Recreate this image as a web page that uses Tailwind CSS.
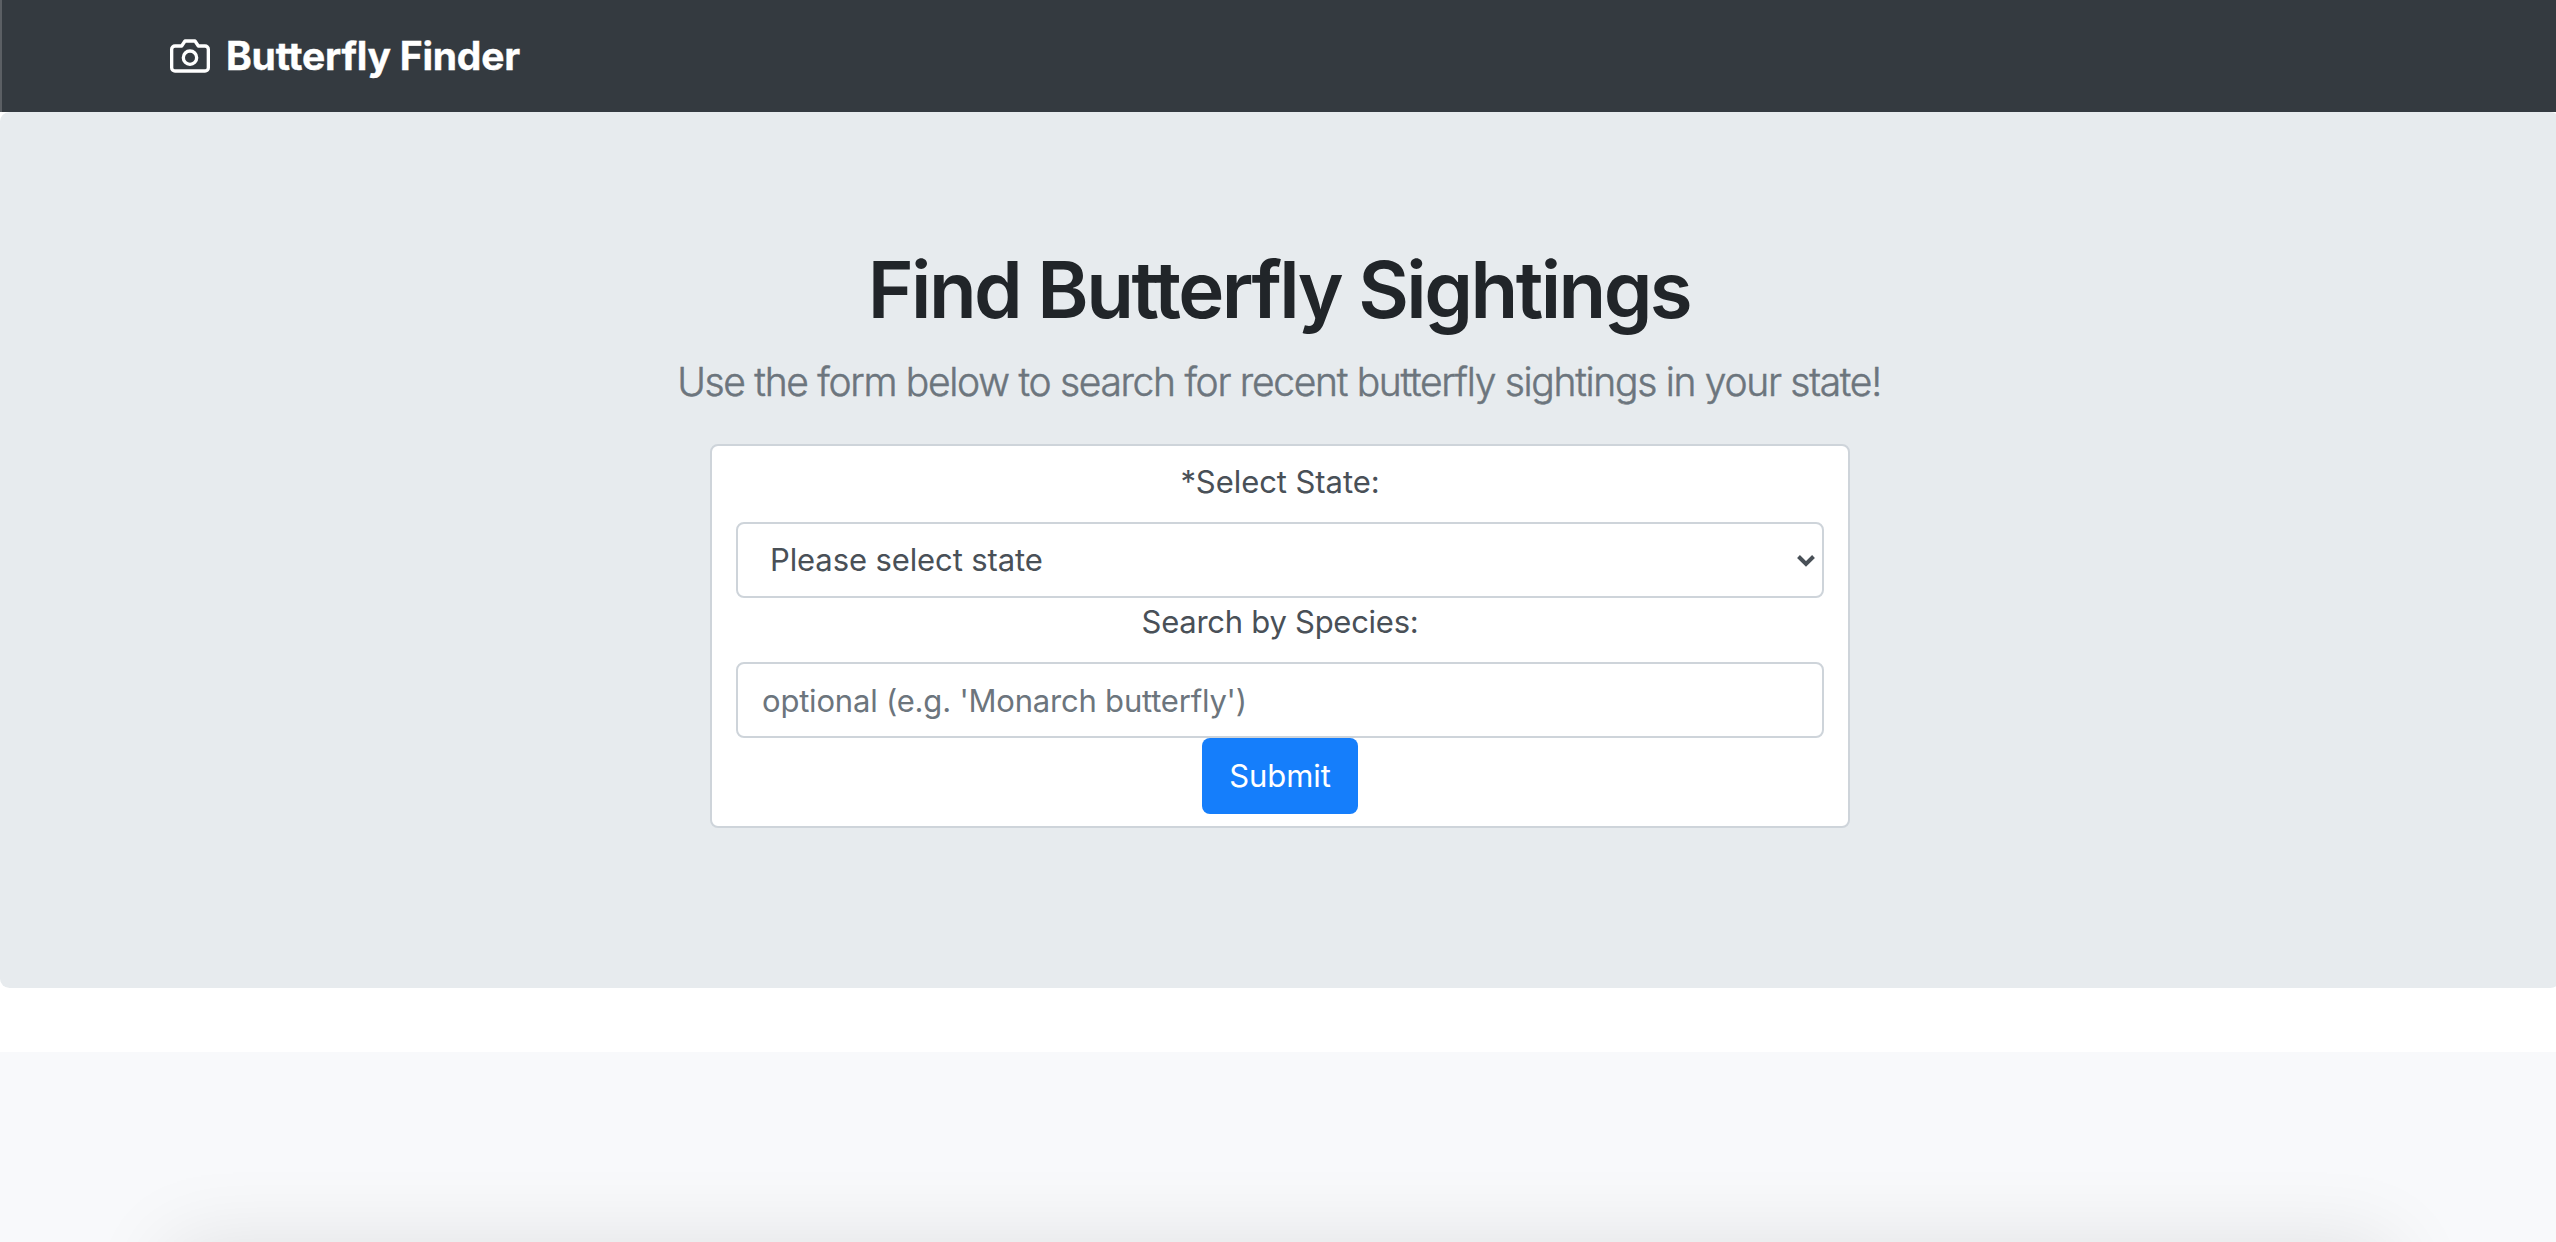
<!DOCTYPE html>
<html lang="en">
<head>
<meta charset="utf-8">
<title>Butterfly Finder</title>
<script src="https://cdn.jsdelivr.net/npm/@tailwindcss/browser@4"></script>
</head>
<body class="h-[1242px] overflow-hidden bg-white font-[Inter,sans-serif] text-[31px] leading-[48px] text-[#212529]">
<div class="w-[2560px]">
  <header class="flex h-28 items-center border-l-2 border-[#5b5f64] bg-[#343a40] pl-[168px]">
    <a class="flex items-center text-[39px] leading-[60px] font-bold tracking-[-0.22px] text-white [-webkit-text-stroke:0.4px_#fff]">
      <svg class="mr-4 size-10" viewBox="0 0 24 24" fill="none" stroke="currentColor" stroke-width="2" stroke-linecap="round" stroke-linejoin="round" aria-hidden="true"><path d="M23 19a2 2 0 0 1-2 2H3a2 2 0 0 1-2-2V8a2 2 0 0 1 2-2h4l2-3h6l2 3h4a2 2 0 0 1 2 2z"/><circle cx="12" cy="13" r="4"/></svg>
      <span>Butterfly Finder</span>
    </a>
  </header>
  <main>
    <section class="mb-16 flex h-[876px] flex-col items-center rounded-[9.6px] bg-[#e7ebee] pt-[130px] text-center">
      <h1 class="mb-3.5 -ml-0.5 text-[78px] leading-24 font-semibold tracking-[-2.56px]">Find Butterfly Sightings</h1>
      <p class="mb-8 -ml-0.5 text-[39px] leading-[60px] font-light tracking-[-1.3px] text-[#6c757d] [-webkit-text-stroke:0.5px_#6c757d]">Use the form below to search for recent butterfly sightings in your state!</p>
      <form class="flex w-[1140px] flex-col items-center rounded-lg border-2 border-[#ced4da] bg-white px-6 py-3 text-[#495057]">
        <label for="state" class="mb-4 tracking-[-0.06px]">*Select State:</label>
        <div class="relative w-full">
          <select id="state" class="block h-[76px] w-full appearance-none rounded-lg border-2 border-[#ced4da] bg-white px-8 tracking-[-0.11px]">
            <option>Please select state</option>
          </select>
          <svg class="pointer-events-none absolute top-[33px] right-[9px] h-[12px] w-[18px]" viewBox="0 0 18 12" fill="none" stroke="#495057" stroke-width="4" aria-hidden="true"><path d="M1.5 1.5 9 9l7.5-7.5"/></svg>
        </div>
        <label for="species" class="mb-4 tracking-[-0.27px]">Search by Species:</label>
        <input id="species" type="text" placeholder="optional (e.g. 'Monarch butterfly')" class="h-[76px] w-full rounded-lg border-2 border-[#ced4da] bg-white px-6 tracking-[-0.2px] placeholder:text-[#6c757d]">
        <button type="button" class="h-[76px] w-[156px] rounded-lg bg-[#157efb] tracking-[-0.09px] text-white">Submit</button>
      </form>
    </section>
    <section class="h-[190px] overflow-hidden bg-[#f8f9fb] px-[170px] pt-48">
      <div class="h-[600px] bg-white shadow-[0_2px_80px_rgba(0,0,0,0.11)]"></div>
    </section>
  </main>
</div>
</body>
</html>
